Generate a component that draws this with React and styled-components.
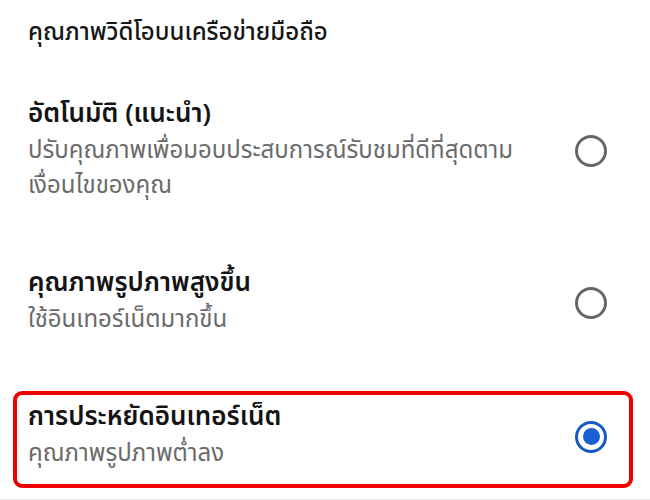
import React, { useState } from "react";
import styled, { createGlobalStyle } from "styled-components";

const GlobalStyle = createGlobalStyle`
  html, body {
    margin: 0;
    padding: 0;
    background: #ffffff;
  }
  body {
    font-family: "Noto Sans Thai", "Noto Sans", "DejaVu Sans", sans-serif;
  }
`;

const Page = styled.div`
  width: 650px;
  height: 500px;
  overflow: hidden;
  padding-top: 18px;
  box-sizing: border-box;
  display: flex;
  flex-direction: column;
  gap: 40px;
`;

const Heading = styled.div`
  padding-left: 28px;
  font-size: 24px;
  line-height: 30px;
  font-weight: 500;
  color: #161616;
`;

const List = styled.div`
  display: flex;
  flex-direction: column;
  gap: 37px;
`;

const Option = styled.div`
  margin: 0 17px 0 13px;
  padding: 6px 22px 12px 11px;
  border: 4px solid ${(p) => (p.$highlight ? "#ee0000" : "transparent")};
  border-radius: 9px;
  display: flex;
  align-items: center;
  gap: 24px;
  cursor: pointer;
`;

const Texts = styled.div`
  flex: 1;
  display: flex;
  flex-direction: column;
  gap: 4px;
`;

const Title = styled.div`
  font-size: 26px;
  line-height: 32px;
  font-weight: 600;
  color: #141414;
`;

const Subtitle = styled.div`
  font-size: 24px;
  line-height: 35px;
  color: #6b6b6b;
`;

const Radio = styled.span`
  width: 32px;
  height: 32px;
  box-sizing: border-box;
  border-radius: 50%;
  border: 3px solid ${(p) => (p.$checked ? "#1559c4" : "#666666")};
  display: flex;
  align-items: center;
  justify-content: center;
  flex-shrink: 0;

  &::after {
    content: "";
    width: 17px;
    height: 17px;
    border-radius: 50%;
    background: #1a5fd6;
    display: ${(p) => (p.$checked ? "block" : "none")};
  }
`;

const Divider = styled.div`
  margin-top: -29px;
  height: 2px;
  background: #e6e6e6;
`;

const options = [
  {
    id: "auto",
    title: "อัตโนมัติ (แนะนำ)",
    lines: ["ปรับคุณภาพเพื่อมอบประสบการณ์รับชมที่ดีที่สุดตาม", "เงื่อนไขของคุณ"],
  },
  {
    id: "high",
    title: "คุณภาพรูปภาพสูงขึ้น",
    lines: ["ใช้อินเทอร์เน็ตมากขึ้น"],
  },
  {
    id: "saver",
    title: "การประหยัดอินเทอร์เน็ต",
    lines: ["คุณภาพรูปภาพต่ำลง"],
  },
];

export default function App() {
  const [selected, setSelected] = useState("saver");

  return (
    <>
      <GlobalStyle />
      <Page>
        <Heading>คุณภาพวิดีโอบนเครือข่ายมือถือ</Heading>
        <List>
          {options.map((o) => (
            <Option
              key={o.id}
              $highlight={o.id === "saver"}
              onClick={() => setSelected(o.id)}
            >
              <Texts>
                <Title>{o.title}</Title>
                <Subtitle>
                  {o.lines.map((l, i) => (
                    <div key={i}>{l}</div>
                  ))}
                </Subtitle>
              </Texts>
              <Radio $checked={selected === o.id} />
            </Option>
          ))}
        </List>
        <Divider />
      </Page>
    </>
  );
}
